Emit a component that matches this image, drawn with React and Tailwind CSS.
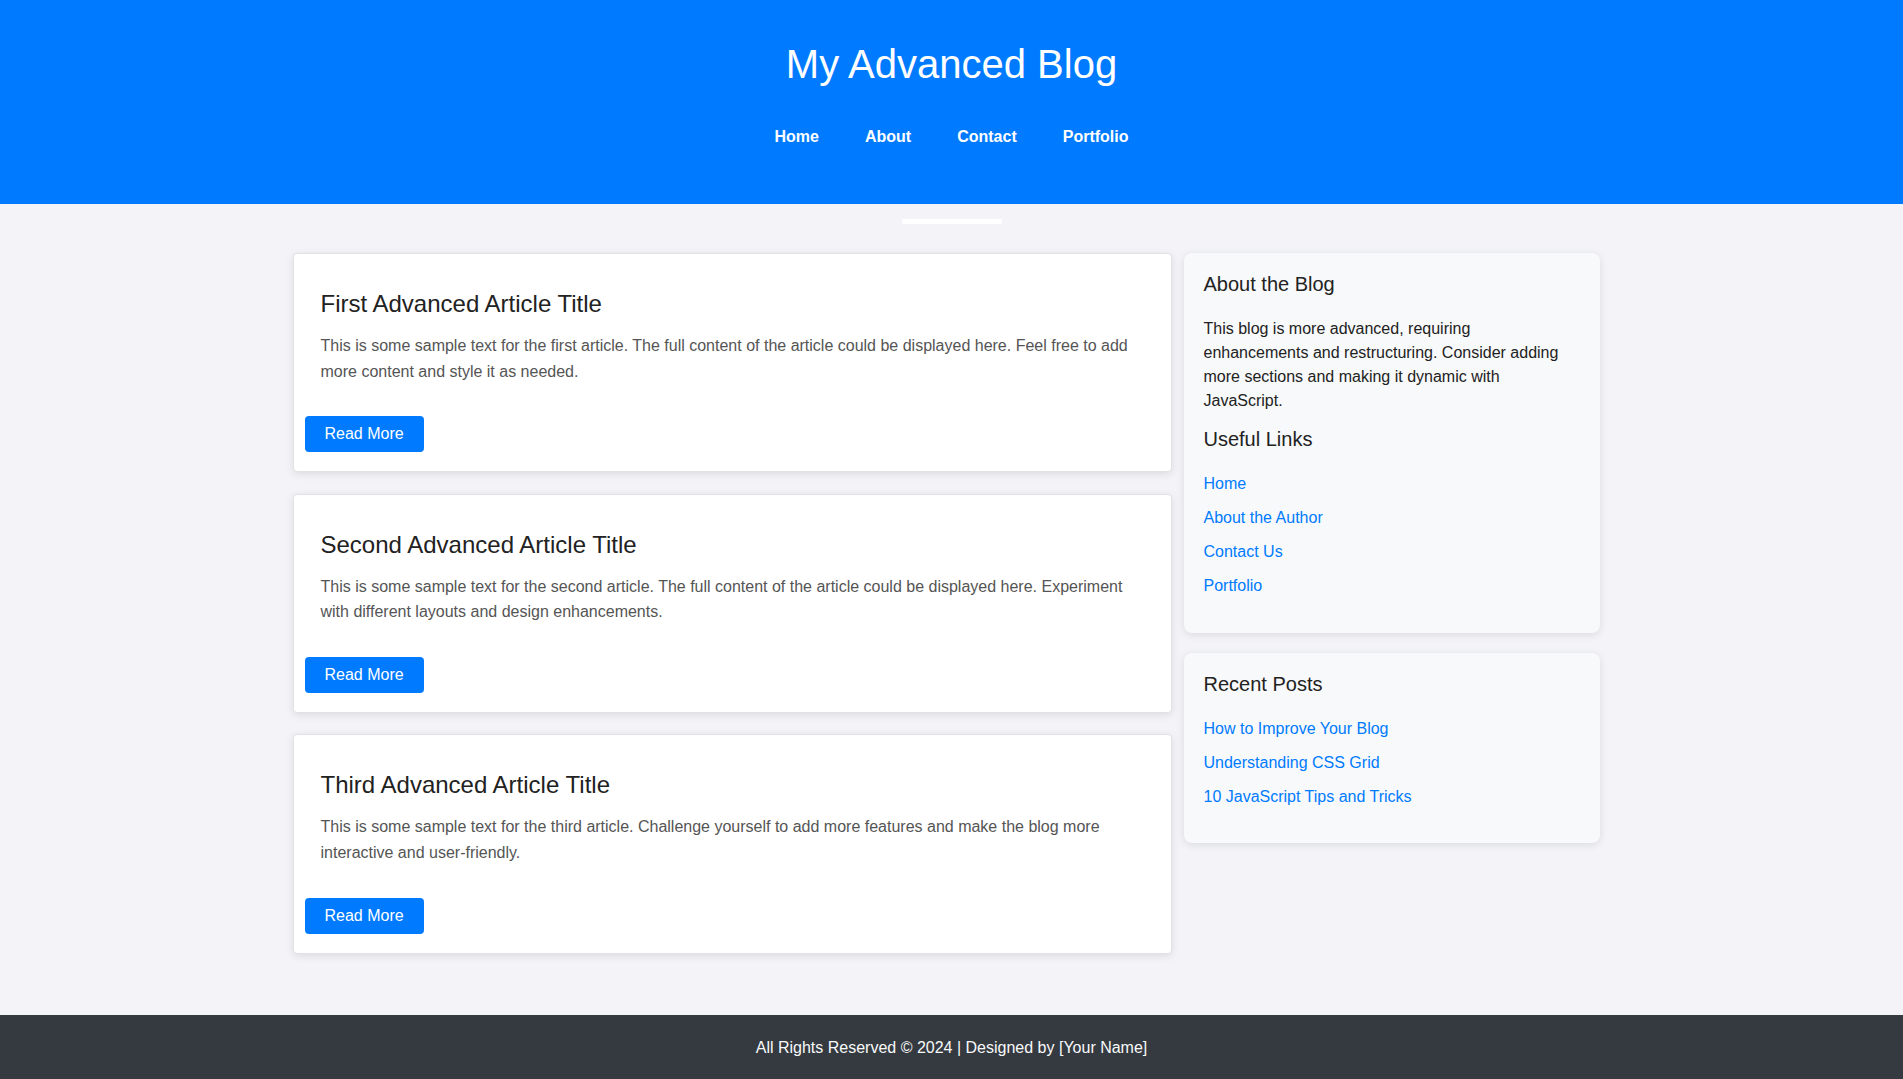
export default function App() {
  const articles = [
    {
      title: "First Advanced Article Title",
      text: "This is some sample text for the first article. The full content of the article could be displayed here. Feel free to add more content and style it as needed.",
    },
    {
      title: "Second Advanced Article Title",
      text: "This is some sample text for the second article. The full content of the article could be displayed here. Experiment with different layouts and design enhancements.",
    },
    {
      title: "Third Advanced Article Title",
      text: "This is some sample text for the third article. Challenge yourself to add more features and make the blog more interactive and user-friendly.",
    },
  ];
  const navItems = ["Home", "About", "Contact", "Portfolio"];
  const usefulLinks = ["Home", "About the Author", "Contact Us", "Portfolio"];
  const recent = ["How to Improve Your Blog", "Understanding CSS Grid", "10 JavaScript Tips and Tricks"];

  return (
    <div className="min-h-screen flex flex-col bg-[#f4f4f8] font-['Liberation_Sans',Arial,sans-serif] text-[16px]">
      <header className="bg-[#007bff] text-white text-center pt-[41px] pb-[58px]">
        <h1 className="text-[40px] leading-[46px] font-normal">My Advanced Blog</h1>
        <nav className="mt-[41px] flex justify-center gap-[14px]">
          {navItems.map((n) => (
            <a key={n} href="#" className="px-4 font-bold leading-[18px] text-white">
              {n}
            </a>
          ))}
        </nav>
      </header>

      <div className="mt-[15px] mx-auto w-[100px] h-[5px] bg-white" />

      <div className="mt-[29px] w-[1320px] mx-auto pl-[1px] flex items-start gap-[12px] pb-[61px]">
        <main className="w-[879px] flex flex-col gap-[21.5px]">
          {articles.map((a) => (
            <article
              key={a.title}
              className="bg-white border border-[#e2e2e6] rounded-[4px] shadow-[0_2px_8px_rgba(0,0,0,0.1)] px-[11px] pt-[36px] pb-[19px]"
            >
              <div className="px-[16px]">
                <h2 className="text-[24px] leading-[28px] font-normal text-[#222]">{a.title}</h2>
                <p className="mt-[15px] leading-[25.6px] text-[#555]">{a.text}</p>
              </div>
              <button className="mt-[32px] h-[36px] px-5 bg-[#007bff] text-white rounded-[4px] leading-[18px]">
                Read More
              </button>
            </article>
          ))}
        </main>

        <aside className="w-[416px] flex flex-col gap-[20px]">
          <div className="bg-[#f8f9fa] rounded-[8px] shadow-[0_2px_8px_rgba(0,0,0,0.1)] pl-[20px] pr-[24px] pt-[20px] pb-[35px]">
            <h3 className="text-[20px] leading-[23px] font-normal text-[#222]">About the Blog</h3>
            <p className="mt-[21px] leading-[24px] text-[#222]">
              This blog is more advanced, requiring enhancements and restructuring. Consider adding more sections and
              making it dynamic with JavaScript.
            </p>
            <h3 className="mt-[15px] text-[20px] leading-[23px] font-normal text-[#222]">Useful Links</h3>
            <ul className="mt-[21px] flex flex-col gap-[10px]">
              {usefulLinks.map((l) => (
                <li key={l} className="leading-[24px]">
                  <a href="#" className="text-[#007bff]">
                    {l}
                  </a>
                </li>
              ))}
            </ul>
          </div>

          <div className="bg-[#f8f9fa] rounded-[8px] shadow-[0_2px_8px_rgba(0,0,0,0.1)] pl-[20px] pr-[24px] pt-[20px] pb-[34px]">
            <h3 className="text-[20px] leading-[23px] font-normal text-[#222]">Recent Posts</h3>
            <ul className="mt-[21px] flex flex-col gap-[10px]">
              {recent.map((l) => (
                <li key={l} className="leading-[24px]">
                  <a href="#" className="text-[#007bff]">
                    {l}
                  </a>
                </li>
              ))}
            </ul>
          </div>
        </aside>
      </div>

      <footer className="mt-auto bg-[#343a40] text-[#f8f9fa] text-center pt-[21px] pb-[19px] leading-[24px]">
        All Rights Reserved © 2024 | Designed by [Your Name]
      </footer>
    </div>
  );
}
